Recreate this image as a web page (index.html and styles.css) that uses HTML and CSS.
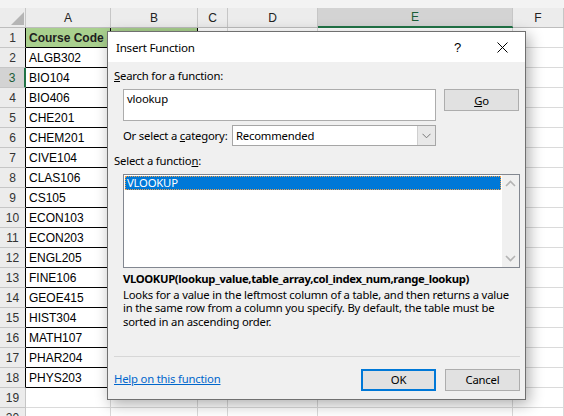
FILE: index.html
```html
<!DOCTYPE html>
<html>
<head>
<meta charset="utf-8">
<link rel="stylesheet" href="styles.css">
</head>
<body>
<div class="sheet">
  <div class="ch corner"><div><svg width="26" height="19" viewBox="0 0 26 19"><polygon points="11,17 24,17 24,4" fill="#b5b5b5"/></svg></div></div>
  <div class="ch"><div>A</div></div>
  <div class="ch"><div>B</div></div>
  <div class="ch"><div>C</div></div>
  <div class="ch"><div>D</div></div>
  <div class="ch sel"><div>E</div></div>
  <div class="ch"><div>F</div></div>

  <div class="cell rh tb">1</div><div class="cell t g">Course Code</div><div class="cell t g"></div><div class="cell"></div><div class="cell"></div><div class="cell"></div><div class="cell"></div>
  <div class="cell rh tb">2</div><div class="cell t">ALGB302</div><div class="cell t"></div><div class="cell"></div><div class="cell"></div><div class="cell"></div><div class="cell"></div>
  <div class="cell rh act">3</div><div class="cell t">BIO104</div><div class="cell t"></div><div class="cell"></div><div class="cell"></div><div class="cell"></div><div class="cell"></div>
  <div class="cell rh tb">4</div><div class="cell t">BIO406</div><div class="cell t"></div><div class="cell"></div><div class="cell"></div><div class="cell"></div><div class="cell"></div>
  <div class="cell rh tb">5</div><div class="cell t">CHE201</div><div class="cell t"></div><div class="cell"></div><div class="cell"></div><div class="cell"></div><div class="cell"></div>
  <div class="cell rh tb">6</div><div class="cell t">CHEM201</div><div class="cell t"></div><div class="cell"></div><div class="cell"></div><div class="cell"></div><div class="cell"></div>
  <div class="cell rh tb">7</div><div class="cell t">CIVE104</div><div class="cell t"></div><div class="cell"></div><div class="cell"></div><div class="cell"></div><div class="cell"></div>
  <div class="cell rh tb">8</div><div class="cell t">CLAS106</div><div class="cell t"></div><div class="cell"></div><div class="cell"></div><div class="cell"></div><div class="cell"></div>
  <div class="cell rh tb">9</div><div class="cell t">CS105</div><div class="cell t"></div><div class="cell"></div><div class="cell"></div><div class="cell"></div><div class="cell"></div>
  <div class="cell rh tb">10</div><div class="cell t">ECON103</div><div class="cell t"></div><div class="cell"></div><div class="cell"></div><div class="cell"></div><div class="cell"></div>
  <div class="cell rh tb">11</div><div class="cell t">ECON203</div><div class="cell t"></div><div class="cell"></div><div class="cell"></div><div class="cell"></div><div class="cell"></div>
  <div class="cell rh tb">12</div><div class="cell t">ENGL205</div><div class="cell t"></div><div class="cell"></div><div class="cell"></div><div class="cell"></div><div class="cell"></div>
  <div class="cell rh tb">13</div><div class="cell t">FINE106</div><div class="cell t"></div><div class="cell"></div><div class="cell"></div><div class="cell"></div><div class="cell"></div>
  <div class="cell rh tb">14</div><div class="cell t">GEOE415</div><div class="cell t"></div><div class="cell"></div><div class="cell"></div><div class="cell"></div><div class="cell"></div>
  <div class="cell rh tb">15</div><div class="cell t">HIST304</div><div class="cell t"></div><div class="cell"></div><div class="cell"></div><div class="cell"></div><div class="cell"></div>
  <div class="cell rh tb">16</div><div class="cell t">MATH107</div><div class="cell t"></div><div class="cell"></div><div class="cell"></div><div class="cell"></div><div class="cell"></div>
  <div class="cell rh tb">17</div><div class="cell t">PHAR204</div><div class="cell t"></div><div class="cell"></div><div class="cell"></div><div class="cell"></div><div class="cell"></div>
  <div class="cell rh tb">18</div><div class="cell t">PHYS203</div><div class="cell t"></div><div class="cell"></div><div class="cell"></div><div class="cell"></div><div class="cell"></div>
  <div class="cell rh">19</div><div class="cell"></div><div class="cell"></div><div class="cell"></div><div class="cell"></div><div class="cell"></div><div class="cell"></div>
  <div class="cell rh">20</div><div class="cell"></div><div class="cell"></div><div class="cell"></div><div class="cell"></div><div class="cell"></div><div class="cell"></div>
</div>

<div class="dialog">
  <div class="titlebar">
    <span class="title">Insert Function</span>
    <span class="tb-btn qm">?</span>
    <span class="tb-btn"><svg width="11" height="11" viewBox="0 0 11 11"><path d="M0.5 0.5 L10.5 10.5 M10.5 0.5 L0.5 10.5" stroke="#000" stroke-width="1"/></svg></span>
  </div>
  <div class="body">
    <div class="label"><u>S</u>earch for a function:</div>
    <div class="search-row">
      <div class="search-box">vlookup</div>
      <div class="btn"><span><u>G</u>o</span></div>
    </div>
    <div class="cat-row">
      <span>Or select a <u>c</u>ategory:</span>
      <div class="select"><span class="sel-text">Recommended</span><span class="arrow"><svg width="9" height="6" viewBox="0 0 9 6"><path d="M0.5 0.8 L4.5 4.8 L8.5 0.8" fill="none" stroke="#777" stroke-width="1"/></svg></span></div>
    </div>
    <div class="label label2">Select a functio<u>n</u>:</div>
    <div class="list">
      <div class="items"><div class="item">VLOOKUP</div></div>
      <div class="scroll">
        <span class="sarrow"><svg width="11" height="7" viewBox="0 0 11 7"><path d="M1 6 L5.5 1.5 L10 6" fill="none" stroke="#b4b4b4" stroke-width="1.6"/></svg></span>
        <span class="sarrow"><svg width="11" height="7" viewBox="0 0 11 7"><path d="M1 1 L5.5 5.5 L10 1" fill="none" stroke="#b4b4b4" stroke-width="1.6"/></svg></span>
      </div>
    </div>
    <div class="syntax">VLOOKUP(lookup_value,table_array,col_index_num,range_lookup)</div>
    <div class="desc">Looks for a value in the leftmost column of a table, and then returns a value<br>in the same row from a column you specify. By default, the table must be<br>sorted in an ascending order.</div>
    <div class="sep"></div>
    <div class="footer">
      <span class="link">Help on this function</span>
      <div class="btns">
        <div class="btn ok">OK</div>
        <div class="btn">Cancel</div>
      </div>
    </div>
  </div>
</div>
</body>
</html>
```

FILE: styles.css
```css
html, body {
  margin: 0;
  padding: 0;
  height: 100%;
  overflow: hidden;
  background: #ffffff;
}
body {
  position: relative;
  font-family: "Liberation Sans", Arial, sans-serif;
  font-size: 12px;
  color: #000;
}
.sheet {
  display: grid;
  grid-template-columns: 26px 85px 87px 30px 90px 195px 1fr;
  grid-template-rows: 28px;
  grid-auto-rows: 20px;
}
.ch {
  background: #f3f3f3;
  border-bottom: 1px solid #bdbdbd;
  box-sizing: border-box;
}
.ch > div {
  margin-top: 8px;
  height: 19px;
  box-sizing: border-box;
  border-right: 1px solid #c6c6c6;
  background: #ececec;
  display: flex;
  align-items: center;
  justify-content: center;
  color: #222;
  font-size: 12px;
}
.ch.corner > div {
  display: block;
}
.ch.corner svg {
  display: block;
}
.ch.sel {
  border-bottom-color: #217346;
}
.ch.sel > div {
  background: #d3d3d3;
  border-bottom: 1px solid #217346;
  color: #1b5e38;
}
.cell {
  box-sizing: border-box;
  border-right: 1px solid #dadada;
  border-bottom: 1px solid #dadada;
  display: flex;
  align-items: center;
  padding-left: 3px;
  white-space: nowrap;
  overflow: hidden;
}
.rh {
  background: #ececec;
  border-right-color: #c6c6c6;
  border-bottom-color: #c6c6c6;
  justify-content: center;
  padding-left: 0;
  color: #333;
}
.rh.tb {
  border-right-color: #000;
}
.rh.act {
  background: #d3d3d3;
  border-right: 2px solid #217346;
  color: #1b5e38;
}
.t {
  border-right-color: #000;
  border-bottom-color: #000;
}
.g {
  background: #a9d08e;
  font-weight: bold;
  color: #1e1e1e;
}

/* Dialog */
.dialog {
  position: absolute;
  left: 107px;
  top: 31px;
  width: 419px;
  height: 369px;
  box-sizing: border-box;
  border: 1px solid #707070;
  background: #f0f0f0;
  box-shadow: 3px 4px 14px rgba(0, 0, 0, 0.33);
  font-family: "Noto Sans", "Open Sans", sans-serif;
  font-size: 11.3px;
  letter-spacing: -0.2px;
  color: #000;
  display: flex;
  flex-direction: column;
}
.titlebar {
  height: 30px;
  flex: none;
  background: #ffffff;
  display: flex;
  align-items: center;
  padding-left: 8px;
  font-size: 11.6px;
  letter-spacing: -0.25px;
}
.title {
  flex: 1;
}
.tb-btn {
  width: 45px;
  height: 30px;
  display: flex;
  align-items: center;
  justify-content: center;
}
.qm {
  font-size: 13px;
  font-family: "Liberation Sans", sans-serif;
}
.body {
  flex: 1;
  padding: 6px 5px 0 6px;
  display: flex;
  flex-direction: column;
}
.label {
  line-height: 16px;
}
.label2 {
  margin-top: 7px;
}
.search-row {
  display: flex;
  align-items: flex-start;
  gap: 8px;
  margin: 5px 0 0 9px;
}
.search-box {
  width: 313px;
  height: 32px;
  box-sizing: border-box;
  border: 1px solid #acacac;
  background: #ffffff;
  padding: 0 3px;
  line-height: 17px;
}
.btn {
  width: 75px;
  height: 22px;
  box-sizing: border-box;
  border: 1px solid #adadad;
  background: #e1e1e1;
  display: flex;
  align-items: center;
  justify-content: center;
}
.cat-row {
  display: flex;
  align-items: center;
  justify-content: space-between;
  width: 313px;
  margin: 4px 0 0 9px;
}
.select {
  width: 204px;
  height: 21px;
  box-sizing: border-box;
  border: 1px solid #a6a6a6;
  background: #ffffff;
  display: flex;
  align-items: center;
  padding-left: 3px;
}
.sel-text {
  flex: 1;
}
.arrow {
  width: 17px;
  height: 19px;
  background: #e8e8e8;
  border-left: 1px solid #cfcfcf;
  display: flex;
  align-items: center;
  justify-content: center;
}
.list {
  width: 397px;
  height: 94px;
  box-sizing: border-box;
  margin: 5px 0 0 9px;
  border: 1px solid #828790;
  background: #ffffff;
  display: flex;
}
.items {
  flex: 1;
  padding: 1px;
}
.item {
  height: 14px;
  box-sizing: border-box;
  background: #0078d7;
  color: #ffffff;
  border: 1px dotted #f0a04a;
  padding-left: 1px;
  line-height: 12px;
}
.scroll {
  width: 17px;
  background: #f0f0f0;
  display: flex;
  flex-direction: column;
  justify-content: space-between;
}
.sarrow {
  width: 17px;
  height: 17px;
  display: flex;
  align-items: center;
  justify-content: center;
}
.syntax {
  font-weight: bold;
  letter-spacing: -0.36px;
  line-height: 14px;
  margin: 4px 0 0 9px;
  white-space: nowrap;
}
.desc {
  line-height: 13.33px;
  margin: 2px 0 0 9px;
  white-space: nowrap;
}
.sep {
  height: 1px;
  background: #d7d7d7;
  margin-top: 28px;
}
.footer {
  display: flex;
  align-items: center;
  margin-top: 12px;
}
.link {
  flex: 1;
  color: #0066cc;
  text-decoration: underline;
  margin-top: -3px;
}
.btns {
  display: flex;
  gap: 9px;
}
.ok {
  border: 2px solid #0078d7;
}
```
